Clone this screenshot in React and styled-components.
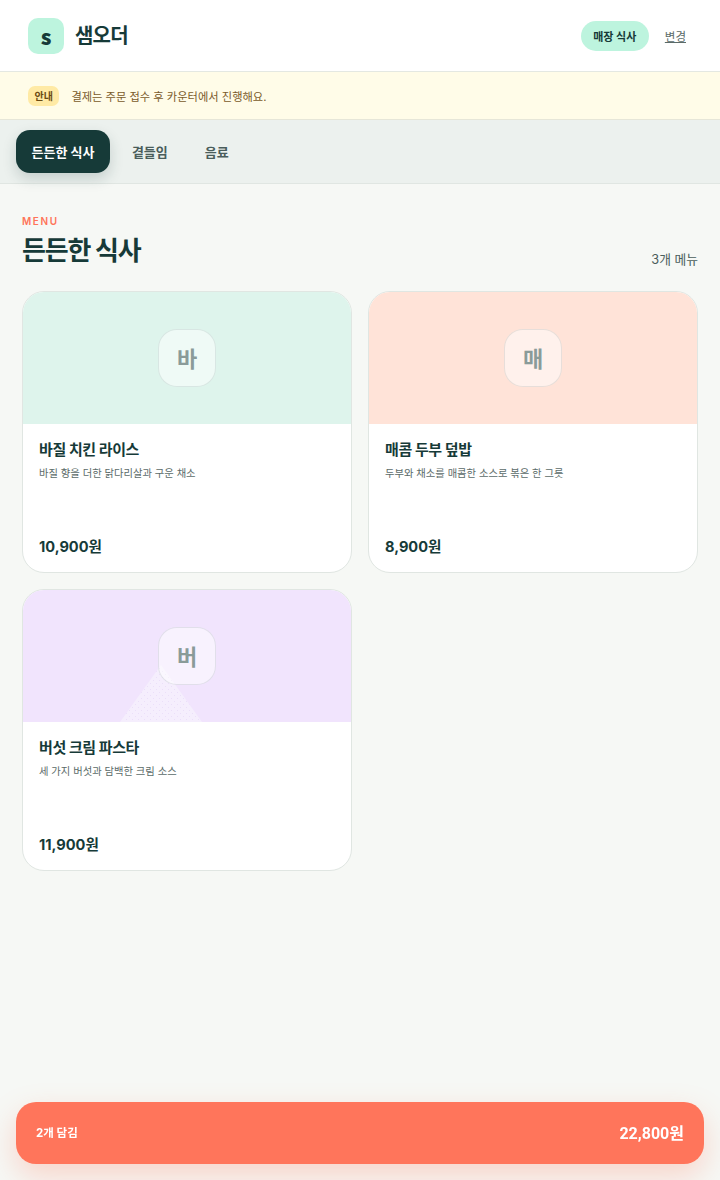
import React from "react";
import styled, { createGlobalStyle } from "styled-components";

const Global = createGlobalStyle`
  html, body { margin: 0; padding: 0; background: #f6f8f5; }
  body { font-family: Inter, "Noto Sans CJK KR", sans-serif; color: #163a38; }
  * { box-sizing: border-box; }
`;
const Page = styled.div`
  min-height: 1180px;
  background: #f6f8f5;
`;
const Header = styled.header`
  height: 72px;
  background: #fff;
  border-bottom: 1px solid #e4e8e2;
  padding: 0 34px 0 28px;
  display: flex;
  align-items: center;
  justify-content: space-between;
`;
const Brand = styled.div`
  display: flex;
  align-items: center;
  gap: 11px;
`;
const Logo = styled.div`
  width: 36px;
  height: 36px;
  border-radius: 10px;
  background: #bdf4de;
  display: flex;
  align-items: center;
  justify-content: center;
  font-family: "Noto Sans CJK KR", sans-serif;
  font-size: 21px;
  font-weight: 900;
  color: #163a38;
`;
const BrandName = styled.div`
  font-size: 20px;
  font-weight: 700;
  letter-spacing: -0.8px;
  color: #163a38;
  padding-bottom: 2px;
`;
const Side = styled.div`
  display: flex;
  align-items: center;
  gap: 16px;
`;
const ModePill = styled.div`
  height: 30px;
  padding: 0 12.5px;
  border-radius: 15px;
  background: #bdf4de;
  font-size: 11px;
  font-weight: 700;
  display: flex;
  align-items: center;
  color: #163a38;
`;
const ChangeLink = styled.a`
  font-size: 11.5px;
  color: #5b6b69;
  text-decoration: underline;
`;
const Notice = styled.div`
  height: 48px;
  background: #fffce8;
  border-bottom: 1px solid #e6e6d8;
  padding: 0 28px;
  display: flex;
  align-items: center;
  gap: 12px;
`;
const NoticeBadge = styled.span`
  height: 20px;
  padding: 0 6.5px;
  border-radius: 7px;
  background: #ffeaa5;
  font-size: 10px;
  font-weight: 700;
  color: #6b4b12;
  display: flex;
  align-items: center;
`;
const NoticeText = styled.span`
  font-size: 11.25px;
  color: #7a5a2a;
`;
const Tabs = styled.nav`
  height: 64px;
  background: #ecf1ee;
  border-bottom: 1px solid #e0e6e2;
  padding: 10px 16px 0;
  display: flex;
  align-items: flex-start;
  gap: 7px;
`;
const Tab = styled.button`
  height: 43px;
  border: 0;
  padding: 0 ${p => (p.$active ? "15.5px" : "15px")};
  border-radius: 14px;
  font-family: inherit;
  font-size: 13px;
  font-weight: 700;
  background: ${p => (p.$active ? "#163a38" : "transparent")};
  color: ${p => (p.$active ? "#fff" : "#4a5d5b")};
  box-shadow: ${p => (p.$active ? "0 6px 14px rgba(22,58,56,.18)" : "none")};
`;
const Main = styled.main`
  padding: 31px 22px 0;
`;
const SectionHead = styled.div`
  display: flex;
  justify-content: space-between;
  align-items: flex-end;
  margin-bottom: 22px;
`;
const Eyebrow = styled.div`
  font-size: 10px;
  line-height: 12px;
  font-weight: 600;
  letter-spacing: 1.6px;
  color: #ff7459;
`;
const Title = styled.h1`
  margin: 6px 0 0;
  font-size: 26px;
  line-height: 36px;
  font-weight: 700;
  letter-spacing: -1.2px;
  color: #163a38;
`;
const Count = styled.div`
  font-size: 12.75px;
  color: #4a5d5b;
  margin-bottom: 1px;
`;
const Grid = styled.div`
  display: grid;
  grid-template-columns: 330px 330px;
  gap: 16px;
`;
const Card = styled.article`
  height: 282px;
  border: 1px solid #e0e6e2;
  border-radius: 22px;
  background: #fff;
  overflow: hidden;
  display: flex;
  flex-direction: column;
`;
const Media = styled.div`
  height: 132px;
  flex: none;
  background: ${p => p.$bg};
  display: flex;
  align-items: center;
  justify-content: center;
  position: relative;
`;
const Rays = styled.svg`
  position: absolute;
  left: 97px;
  bottom: 0;
`;
const Tile = styled.div`
  position: relative;
  width: 58px;
  height: 58px;
  padding-bottom: 3px;
  border-radius: 19px;
  border: 1px solid rgba(22, 58, 56, 0.1);
  background: rgba(255, 255, 255, 0.5);
  display: flex;
  align-items: center;
  justify-content: center;
  font-size: 22px;
  font-weight: 700;
  color: #8a9b99;
`;
const Body = styled.div`
  flex: 1;
  padding: 16px 16px 15px;
  display: flex;
  flex-direction: column;
`;
const Name = styled.h2`
  margin: 0;
  font-size: 15px;
  line-height: 20px;
  font-weight: 700;
  letter-spacing: -0.42px;
  color: #163a38;
`;
const Desc = styled.p`
  margin: 5px 0 0;
  font-size: 10.3px;
  line-height: 16px;
  color: #5b6b69;
`;
const Price = styled.div`
  margin-top: auto;
  font-size: 14.6px;
  line-height: 20px;
  font-weight: 700;
  color: #163a38;
`;
const CartBar = styled.div`
  position: fixed;
  left: 16px;
  right: 16px;
  bottom: 16px;
  height: 62px;
  border-radius: 20px;
  background: #ff755b;
  padding: 0 20px 2px;
  display: flex;
  align-items: center;
  justify-content: space-between;
  color: #fff;
  box-shadow: 0 12px 30px rgba(255, 117, 91, 0.28);
`;
const CartCount = styled.span`
  font-size: 11.5px;
  font-weight: 700;
`;
const CartTotal = styled.span`
  font-family: Roboto, "Noto Sans CJK KR", sans-serif;
  font-size: 16px;
  font-weight: 700;
`;

const items = [
  { bg: "#def4ec", g: "바", n: "바질 치킨 라이스", d: "바질 향을 더한 닭다리살과 구운 채소", p: "10,900원" },
  { bg: "#ffe3d8", g: "매", n: "매콤 두부 덮밥", d: "두부와 채소를 매콤한 소스로 볶은 한 그릇", p: "8,900원" },
  { bg: "#f1e4fd", g: "버", n: "버섯 크림 파스타", d: "세 가지 버섯과 담백한 크림 소스", p: "11,900원", rays: true },
];

export default function App() {
  return (
    <Page>
      <Global />
      <Header>
        <Brand>
          <Logo>s</Logo>
          <BrandName>샘오더</BrandName>
        </Brand>
        <Side>
          <ModePill>매장 식사</ModePill>
          <ChangeLink>변경</ChangeLink>
        </Side>
      </Header>
      <Notice>
        <NoticeBadge>안내</NoticeBadge>
        <NoticeText>결제는 주문 접수 후 카운터에서 진행해요.</NoticeText>
      </Notice>
      <Tabs>
        <Tab $active>든든한 식사</Tab>
        <Tab>곁들임</Tab>
        <Tab>음료</Tab>
      </Tabs>
      <Main>
        <SectionHead>
          <div>
            <Eyebrow>MENU</Eyebrow>
            <Title>든든한 식사</Title>
          </div>
          <Count>3개 메뉴</Count>
        </SectionHead>
        <Grid>
          {items.map(it => (
            <Card key={it.n}>
              <Media $bg={it.bg}>
                {it.rays && (
                  <Rays width="82" height="57" viewBox="0 0 82 57">
                    <defs>
                      <pattern id="dots" width="6" height="6" patternUnits="userSpaceOnUse">
                        <rect width="6" height="6" fill="#f5eefd" />
                        <rect x="0" y="0" width="1" height="1" fill="#ebdff9" />
                        <rect x="3" y="3" width="1" height="1" fill="#ebdff9" />
                      </pattern>
                    </defs>
                    <polygon points="41,0 82,57 0,57" fill="url(#dots)" />
                  </Rays>
                )}
                <Tile>{it.g}</Tile>
              </Media>
              <Body>
                <Name>{it.n}</Name>
                <Desc>{it.d}</Desc>
                <Price>{it.p}</Price>
              </Body>
            </Card>
          ))}
        </Grid>
      </Main>
      <CartBar>
        <CartCount>2개 담김</CartCount>
        <CartTotal>22,800원</CartTotal>
      </CartBar>
    </Page>
  );
}
